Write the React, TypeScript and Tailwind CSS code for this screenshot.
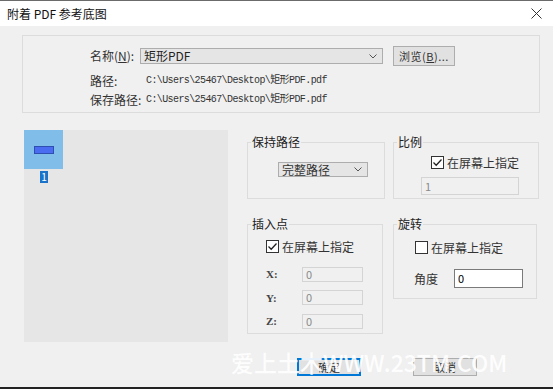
import React from "react";

const cjk = { fontFamily: '"Noto Sans CJK SC", "Noto Sans", sans-serif' };
const mono = { fontFamily: '"Liberation Mono", "Noto Sans CJK SC", monospace' };

function Chevron() {
  return (
    <svg width="8" height="5" viewBox="0 0 8 5" className="shrink-0">
      <path d="M0.5 0.5 L4 4 L7.5 0.5" fill="none" stroke="#555" strokeWidth="1" />
    </svg>
  );
}

function CheckBox({ checked }: { checked: boolean }) {
  return (
    <span className="w-[13px] h-[13px] border border-[#333] bg-white flex items-center justify-center shrink-0">
      {checked && (
        <svg width="11" height="11" viewBox="0 0 11 11">
          <path d="M1.5 5.5 L4.2 8.2 L9.5 2.5" fill="none" stroke="#222" strokeWidth="1.3" />
        </svg>
      )}
    </span>
  );
}

function Group({
  title,
  className,
  children,
}: {
  title: string;
  className: string;
  children?: React.ReactNode;
}) {
  return (
    <fieldset className={"border border-[#dcdcdc] m-0 p-0 min-w-0 " + className}>
      <legend className="ml-[3px] px-[1px] text-[12px] leading-[16px] text-[#222]" style={cjk}>
        {title}
      </legend>
      {children}
    </fieldset>
  );
}

function DisabledInput({ value, className }: { value: string; className: string }) {
  return (
    <div
      className={
        "border border-[#d4d4d4] bg-[#f0f0f0] text-[#8a8a8a] text-[11px] leading-none flex items-center pl-[3px] " +
        className
      }
      style={cjk}
    >
      {value}
    </div>
  );
}

export default function App() {
  return (
    <div
      className="w-[553px] h-[389px] flex flex-col bg-[#f0f0f0] border-t border-[#6b6b6b] border-b-2 border-b-[#222] relative overflow-hidden text-[#333]"
      style={cjk}
    >
      {/* Title bar */}
      <div className="h-[25px] bg-white flex items-center justify-between pl-[7px] pr-[11px] shrink-0">
        <span className="text-[12px] text-[#111]" style={cjk}>
          附着 PDF 参考底图
        </span>
        <svg width="11" height="11" viewBox="0 0 11 11">
          <path d="M0.5 0.5 L10.5 10.5 M10.5 0.5 L0.5 10.5" stroke="#333" strokeWidth="1" />
        </svg>
      </div>

      {/* Top group */}
      <div className="mt-[9px] ml-[22px] w-[518px] h-[78px] border border-[#dcdcdc] pt-[10px] pl-[67px] text-[12px]">
        <div className="flex items-center h-[20px]">
          <span className="w-[50px]">名称(<span className="underline">N</span>):</span>
          <div className="w-[243px] h-[16px] bg-[#e5e5e5] border border-[#adadad] flex items-center justify-between pl-[3px] pr-[5px]">
            <span className="text-[12px] leading-none text-[#222]">矩形PDF</span>
            <Chevron />
          </div>
          <div className="ml-[10px] w-[62px] h-[20px] bg-[#e1e1e1] border border-[#adadad] flex items-center justify-center text-[11px] tracking-[0.5px]">
            浏览(<span className="underline">B</span>)...
          </div>
        </div>
        <div className="flex items-center h-[19px] mt-[5px]">
          <span className="w-[56px]">路径:</span>
          <span className="text-[10px] tracking-[-0.6px]" style={mono}>
            C:\Users\25467\Desktop\矩形PDF.pdf
          </span>
        </div>
        <div className="flex items-center h-[19px]">
          <span className="w-[56px]">保存路径:</span>
          <span className="text-[10px] tracking-[-0.6px]" style={mono}>
            C:\Users\25467\Desktop\矩形PDF.pdf
          </span>
        </div>
      </div>

      {/* Lower section */}
      <div className="flex mt-[17px]">
        <div className="ml-[24px] w-[204px] h-[212px] bg-[#e6e6e6] flex flex-col items-start">
          <div className="w-[39px] h-[39px] bg-[#80bde9] flex items-center justify-center">
            <div className="w-[20px] h-[8px] bg-[#4a6cf0] border border-[#2f4fb0]" />
          </div>
          <div className="ml-[16px] mt-[2px] w-[8px] h-[12px] bg-[#1a73c8] text-white text-[10px] leading-[12px] text-center">
            1
          </div>
        </div>

        <div className="ml-[19px] mt-[4px] flex flex-col">
          <div className="flex gap-[8px]">
            <Group title="保持路径" className="w-[138px] h-[65px]">
              <div className="ml-[30px] mt-[12px] w-[90px] h-[15px] bg-[#e5e5e5] border border-[#adadad] flex items-center justify-between pl-[3px] pr-[5px] text-[12px] leading-none text-[#333]">
                <span>完整路径</span>
                <Chevron />
              </div>
            </Group>
            <Group title="比例" className="w-[146px] h-[65px]">
              <div className="ml-[37px] mt-[6px] flex items-center gap-[3px] text-[12px] leading-none text-[#333]">
                <CheckBox checked />
                <span>在屏幕上指定</span>
              </div>
              <DisabledInput value="1" className="ml-[27px] mt-[8px] w-[98px] h-[18px]" />
            </Group>
          </div>

          <div className="flex gap-[10px] mt-[17px] items-start">
            <Group title="插入点" className="w-[136px] h-[118px]">
              <div className="ml-[18px] mt-[8px] flex items-center gap-[3px] text-[12px] leading-none text-[#333]">
                <CheckBox checked />
                <span>在屏幕上指定</span>
              </div>
              <div className="mt-[13px] flex flex-col gap-[7px]">
                {["X", "Y", "Z"].map((l) => (
                  <div key={l} className="flex items-center ml-[18px]">
                    <span className="w-[36px] text-[11px] font-bold text-[#444]" style={{ fontFamily: '"Liberation Serif", serif' }}>
                      {l}:
                    </span>
                    <DisabledInput value="0" className="w-[61px] h-[15px]" />
                  </div>
                ))}
              </div>
            </Group>
            <Group title="旋转" className="w-[144px] h-[83px]">
              <div className="ml-[21px] mt-[9px] flex items-center gap-[3px] text-[12px] leading-none text-[#333]">
                <CheckBox checked={false} />
                <span>在屏幕上指定</span>
              </div>
              <div className="ml-[20px] mt-[15px] flex items-center">
                <span className="w-[40px] text-[12px] text-[#333]">角度</span>
                <div className="w-[69px] h-[19px] bg-white border border-[#7a7a7a] text-[11px] text-black flex items-center pl-[3px]">
                  0
                </div>
              </div>
            </Group>
          </div>
        </div>
      </div>

      {/* Buttons */}
      <div className="flex mt-[16px] ml-[297px] gap-[52px]">
        <div className="w-[64px] h-[18px] bg-[#e1e1e1] border-2 border-[#0078d7] flex items-center justify-center text-[11px] text-[#333]">
          确定
        </div>
        <div className="w-[64px] h-[18px] bg-[#e1e1e1] border border-[#adadad] flex items-center justify-center text-[11px] text-[#333]">
          取消
        </div>
      </div>

      {/* Watermark */}
      <div
        className="absolute left-[231px] top-[345px] text-[23px] leading-[32px] font-medium text-white opacity-90 whitespace-nowrap pointer-events-none"
        style={{ fontFamily: '"Noto Sans CJK SC", "Liberation Sans", sans-serif' }}
      >
        爱上土木WWW.23TM.COM
      </div>
    </div>
  );
}
